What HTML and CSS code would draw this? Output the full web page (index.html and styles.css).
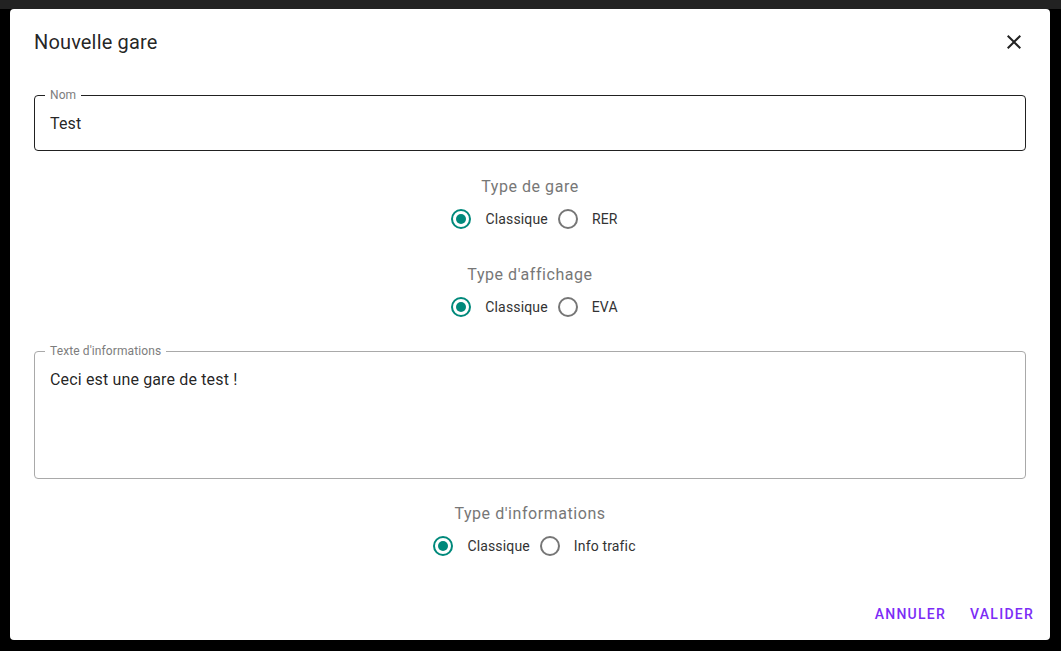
FILE: index.html
```html
<!DOCTYPE html>
<html lang="fr">
<head>
<meta charset="utf-8">
<title>Nouvelle gare</title>
<link rel="stylesheet" href="styles.css">
</head>
<body>
<div class="topbar"></div>
<div class="dialog">
  <div class="dialog-title">
    <h2 class="title-text">Nouvelle gare</h2>
    <button class="close-btn" aria-label="Fermer">
      <svg viewBox="0 0 24 24" width="24" height="24"><path d="M19 6.41L17.59 5 12 10.59 6.41 5 5 6.41 10.59 12 5 17.59 6.41 19 12 13.41 17.59 19 19 17.59 13.41 12z" fill="#222"/></svg>
    </button>
  </div>
  <div class="dialog-content">
    <fieldset class="field field-dark">
      <legend class="field-label">Nom</legend>
      <div class="field-value">Test</div>
    </fieldset>

    <div class="group group-first">
      <div class="group-label">Type de gare</div>
      <div class="radio-row">
        <label class="option"><span class="radio checked"></span><span class="option-text">Classique</span></label>
        <label class="option"><span class="radio"></span><span class="option-text">RER</span></label>
      </div>
    </div>

    <div class="group">
      <div class="group-label">Type d'affichage</div>
      <div class="radio-row">
        <label class="option"><span class="radio checked"></span><span class="option-text">Classique</span></label>
        <label class="option"><span class="radio"></span><span class="option-text">EVA</span></label>
      </div>
    </div>

    <fieldset class="field field-light field-multi">
      <legend class="field-label">Texte d'informations</legend>
      <div class="field-value">Ceci est une gare de test !</div>
    </fieldset>

    <div class="group group-after-field">
      <div class="group-label">Type d'informations</div>
      <div class="radio-row">
        <label class="option"><span class="radio checked"></span><span class="option-text">Classique</span></label>
        <label class="option"><span class="radio"></span><span class="option-text">Info trafic</span></label>
      </div>
    </div>
  </div>
  <div class="dialog-actions">
    <button class="text-btn">Annuler</button>
    <button class="text-btn">Valider</button>
  </div>
</div>
</body>
</html>
```

FILE: styles.css
```css
* { box-sizing: border-box; }

html, body {
  margin: 0;
  padding: 0;
  background: #000;
  font-family: Roboto, "Liberation Sans", Arial, sans-serif;
  height: 100%;
  overflow: hidden;
}

body {
  display: flex;
  flex-direction: column;
}

.topbar {
  height: 9px;
  background: #222222;
  flex-shrink: 0;
}

.dialog {
  margin: 0 11px 0 10px;
  width: 1040px;
  height: 631px;
  background: #fff;
  border-radius: 4px;
  display: flex;
  flex-direction: column;
}

.dialog-title {
  display: flex;
  align-items: center;
  justify-content: space-between;
  padding: 17px 24px 15px 24px;
  height: 64px;
}

.title-text {
  margin: 0;
  font-size: 20px;
  font-weight: 400;
  line-height: 32px;
  letter-spacing: 0.15px;
  color: rgba(0, 0, 0, 0.87);
}

.close-btn {
  width: 24px;
  height: 24px;
  padding: 0;
  border: none;
  background: none;
  display: flex;
}

.dialog-content {
  padding: 0 24px;
  display: flex;
  flex-direction: column;
}

.field {
  margin: 16px 0 0 0;
  border-radius: 4px;
  padding: 11px 15px 14px 15px;
  min-width: 0;
}

.field-dark {
  border: 1px solid rgba(0, 0, 0, 0.87);
}

.field-light {
  border: 1px solid #a9a9a9;
  margin-top: 17px;
  padding: 11px 15px 86px 15px;
}

.field-label {
  font-size: 12px;
  line-height: 12px;
  letter-spacing: 0.1px;
  color: #7d7d7d;
  padding: 0 5px;
  margin-left: -5px;
}

.field-value {
  font-size: 16px;
  line-height: 24px;
  letter-spacing: 0.15px;
  color: rgba(0, 0, 0, 0.87);
}

.group {
  display: flex;
  flex-direction: column;
  align-items: center;
  margin-top: 23px;
}

.group-first { margin-top: 24px; }
.group-after-field { margin-top: 23px; }

.group-label {
  font-size: 16px;
  line-height: 24px;
  letter-spacing: 0.55px;
  color: #777;
}

.radio-row {
  display: flex;
  align-items: center;
  height: 42px;
  margin-top: -1px;
  padding-left: 9px;
}

.option {
  display: flex;
  align-items: center;
  margin-right: 10px;
}

.option:last-child { margin-right: 0; }

.radio {
  width: 20px;
  height: 20px;
  border-radius: 50%;
  border: 2px solid #767676;
  display: flex;
  align-items: center;
  justify-content: center;
  margin-right: 14px;
}

.radio.checked {
  border-color: #00897b;
}

.radio.checked::after {
  content: "";
  width: 10px;
  height: 10px;
  border-radius: 50%;
  background: #00897b;
}

.option-text {
  font-size: 14px;
  line-height: 20px;
  letter-spacing: 0.15px;
  color: #333;
}

.dialog-actions {
  margin-top: auto;
  display: flex;
  justify-content: flex-end;
  gap: 8px;
  padding: 0 8px 8px 0;
}

.text-btn {
  height: 36px;
  padding: 0 8px;
  border: none;
  background: none;
  font-family: Roboto, "Liberation Sans", Arial, sans-serif;
  font-size: 14px;
  font-weight: 500;
  letter-spacing: 1.25px;
  text-transform: uppercase;
  color: #7c2cf6;
}
```
